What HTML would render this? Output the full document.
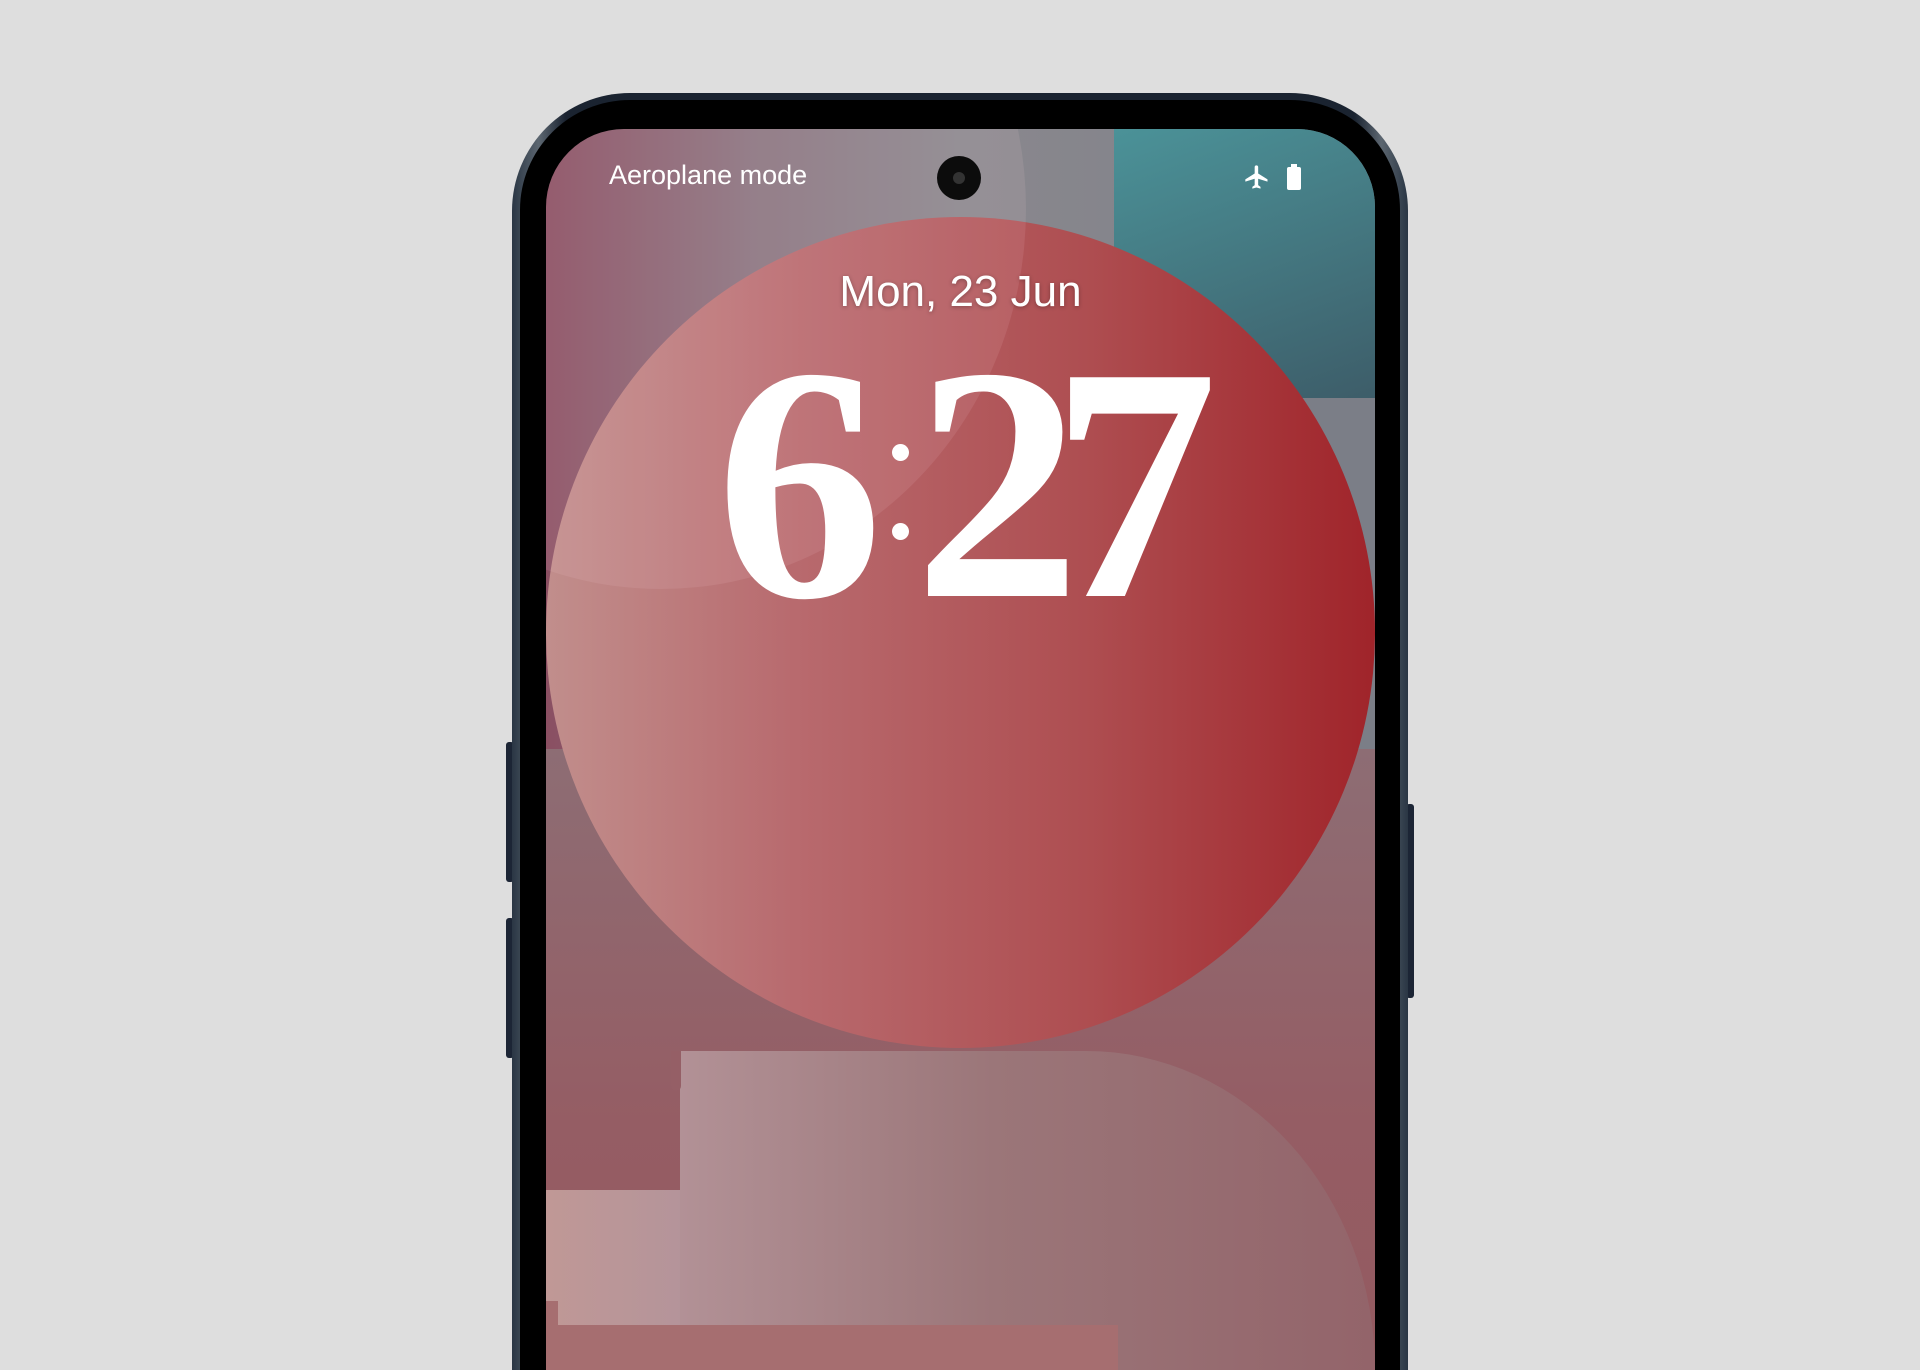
<!DOCTYPE html>
<html><head><style>
html,body{margin:0;padding:0;overflow:hidden;}
body{width:1920px;height:1370px;background:#dedede;position:relative;font-family:"Liberation Sans",sans-serif;}
#wrap{position:absolute;left:0;top:0;width:1920px;height:1370px;overflow:hidden;}
.btn{position:absolute;background:#1c2535;border-radius:3px;}
.phone{position:absolute;left:512px;top:93px;width:896px;height:1277px;border-radius:118px 118px 0 0;background:linear-gradient(90deg,#2a3644,#5c6670 3%,#1a2330 6%,#1a2330 94%,#5c6670 97%,#2a3644);}
.bezel{position:absolute;left:8px;top:7px;right:8px;bottom:0;border-radius:110px 110px 0 0;background:#000;}
.screen{position:absolute;left:546px;top:129px;width:829px;height:1241px;border-radius:78px 78px 0 0;overflow:hidden;background:linear-gradient(90deg,#8a4f62 0%,#8a7580 25%,#8a888e 50%,#7c7f87 100%);}
.abs{position:absolute;}
.d{position:absolute;font-family:'Liberation Serif',serif;font-weight:bold;font-size:334px;line-height:334px;color:#fff;}
</style></head><body><div id="wrap">
<div class="btn" style="left:506px;top:742px;width:8px;height:140px"></div>
<div class="btn" style="left:506px;top:918px;width:8px;height:140px"></div>
<div class="btn" style="left:1406px;top:804px;width:8px;height:194px"></div>
<div class="phone"><div class="bezel"></div></div>
<div class="screen">
  <div class="abs" style="left:568px;top:0;width:261px;height:269px;background:linear-gradient(160deg,#4b9298,#3d5d69)"></div>
  <div class="abs" style="left:568px;top:269px;width:261px;height:400px;background:#7b7e87"></div>
  <div class="abs" style="left:0;top:620px;width:829px;height:621px;background:linear-gradient(180deg,#8d6d74 0%,#955d64 60%,#945a60 100%)"></div>
  <div class="abs" style="left:0;top:1061px;width:140px;height:180px;background:linear-gradient(90deg,#c09896,#b4949a)"></div>
  <div class="abs" style="left:134px;top:922px;width:695px;height:319px;border-top-right-radius:380px 420px;background:linear-gradient(90deg,#b29196,#9b7679 45%,#93646a 100%)"></div>
  <div class="abs" style="left:12px;top:1196px;width:560px;height:45px;background:#a66e70"></div>
  <div class="abs" style="left:0;top:1172px;width:12px;height:69px;background:#a66e70"></div>
  <div class="abs" style="left:125px;top:922px;width:10px;height:40px;border-radius:0 0 6px 6px;background:#955f66"></div>
  <div class="abs" style="left:0;top:88px;width:829px;height:831px;border-radius:50%;background:linear-gradient(90deg,#c18e8c 0%,#b86a6e 30%,#ae4e51 65%,#a0242a 100%)"></div>
  <div class="abs" style="left:-250px;top:-300px;width:730px;height:760px;border-radius:50%;background:rgba(255,220,225,0.10)"></div>
  <div class="abs" style="left:63px;top:30px;font-size:27px;color:#fff;line-height:32px">Aeroplane mode</div>
  <div class="abs" style="left:391px;top:27px;width:44px;height:44px;border-radius:50%;background:#0c0c0c"><div style="position:absolute;left:16px;top:16px;width:12px;height:12px;border-radius:50%;background:#333"></div></div>
  <svg class="abs" style="left:697px;top:34px" width="28" height="28" viewBox="0 0 24 24"><path fill="#fff" d="M21 16v-2l-8-5V3.5a1.5 1.5 0 0 0-3 0V9l-8 5v2l8-2.5V19l-2 1.5V22l3.5-1 3.5 1v-1.5L13 19v-5.5z"/></svg>
  <svg class="abs" style="left:740px;top:35px" width="16" height="26" viewBox="0 0 16 26"><rect x="5" y="0" width="6" height="3" fill="#fff"/><rect x="1" y="3" width="14" height="23" rx="2" fill="#fff"/></svg>
  <div class="abs" style="left:0;width:829px;top:138px;text-align:center;font-size:44px;color:#fff;text-shadow:0 1px 4px rgba(0,0,0,0.3)">Mon, 23 Jun</div>
  <div class="d" style="left:170px;top:188px">6</div>
  <div class="abs" style="left:346px;top:315px;width:17px;height:17px;border-radius:50%;background:#fff"></div>
  <div class="abs" style="left:346px;top:394px;width:17px;height:17px;border-radius:50%;background:#fff"></div>
  <div class="d" style="left:368px;top:188px">2</div>
  <div class="d" style="left:505px;top:188px">7</div>
</div>
</div></body></html>
